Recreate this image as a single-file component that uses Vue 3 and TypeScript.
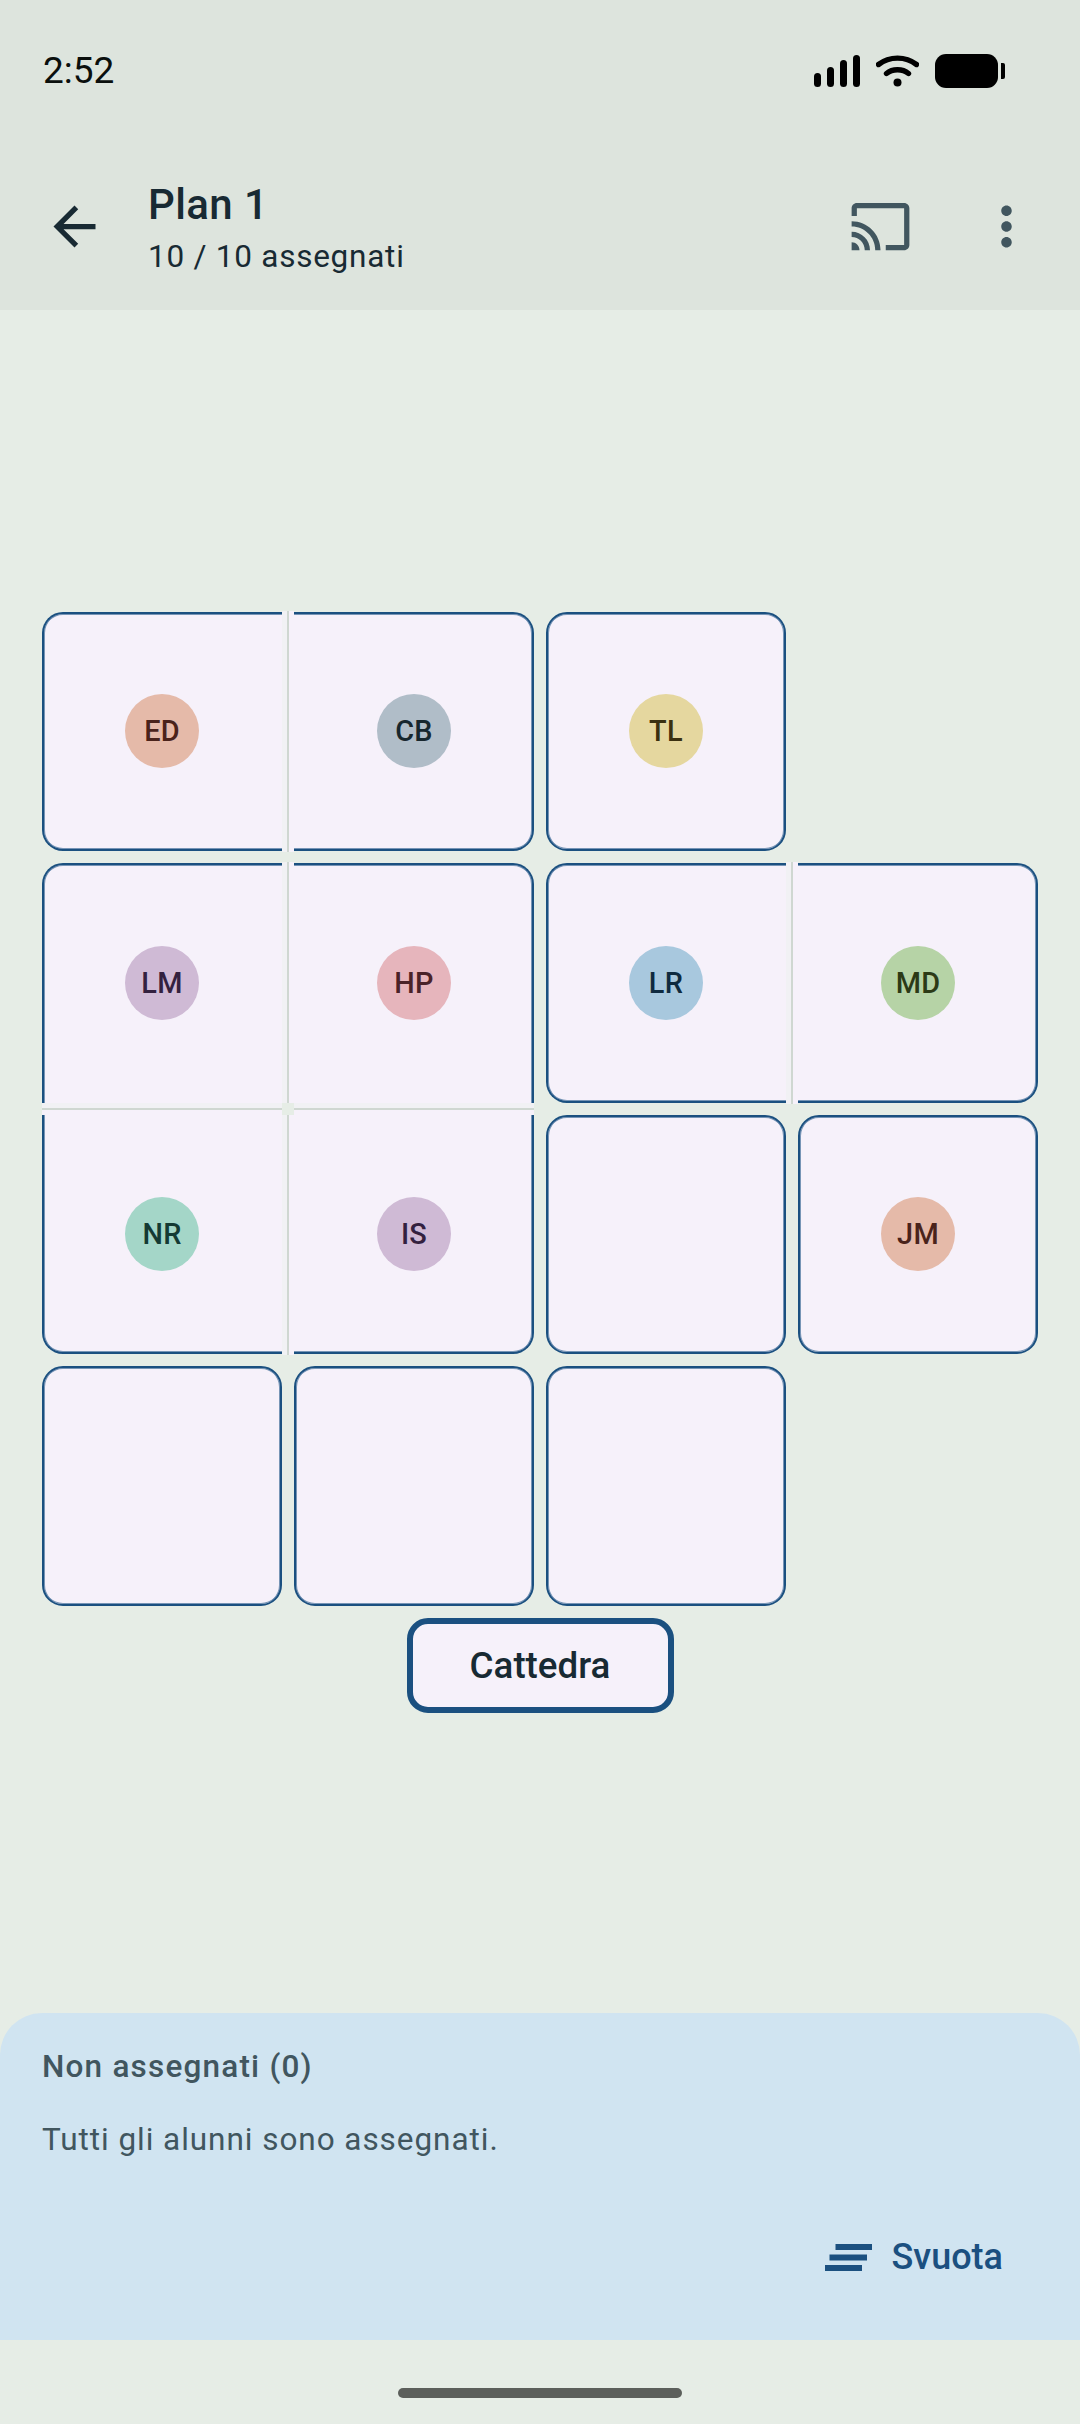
<script setup lang="ts">
interface Seat {
  id: number
  col: number
  initials?: string
  bg?: string
  fg?: string
  join?: string
  seamRight?: boolean
  seamBottom?: boolean
}

const seats: Seat[] = [
  { id: 1, col: 1, initials: 'ED', bg: '#e5baa9', fg: '#4a231b', join: 'join-r', seamRight: true },
  { id: 2, col: 2, initials: 'CB', bg: '#b0bdc8', fg: '#17272e', join: 'join-l' },
  { id: 3, col: 3, initials: 'TL', bg: '#e5d79f', fg: '#3a3010' },
  { id: 4, col: 1, initials: 'LM', bg: '#cfbad5', fg: '#33213f', join: 'join-r join-b', seamRight: true, seamBottom: true },
  { id: 5, col: 2, initials: 'HP', bg: '#e6b5bc', fg: '#4a2228', join: 'join-l join-b', seamBottom: true },
  { id: 6, col: 3, initials: 'LR', bg: '#a8c8de', fg: '#0f2b40', join: 'join-r', seamRight: true },
  { id: 7, col: 4, initials: 'MD', bg: '#b6d3a6', fg: '#2c3a16', join: 'join-l' },
  { id: 8, col: 1, initials: 'NR', bg: '#a4d6c8', fg: '#143a33', join: 'join-r join-t', seamRight: true },
  { id: 9, col: 2, initials: 'IS', bg: '#cfbad5', fg: '#33213f', join: 'join-l join-t' },
  { id: 10, col: 3 },
  { id: 11, col: 4, initials: 'JM', bg: '#e5baa9', fg: '#4a231b' },
  { id: 12, col: 1 },
  { id: 13, col: 2 },
  { id: 14, col: 3 }
]
</script>

<template>
  <div class="page">
    <header class="top">
      <div class="status">
        <span class="time">2:52</span>
        <div class="status-icons">
          <div class="signal">
            <i class="b1"></i><i class="b2"></i><i class="b3"></i><i class="b4"></i>
          </div>
          <svg class="wifi" width="43" height="32" viewBox="0 0 43 32">
            <path d="M2.5 9.5C13.5 1 29.5 1 40.5 9.5" fill="none" stroke="#000" stroke-width="5.4" stroke-linecap="round" />
            <path d="M10.5 18.5C16.5 13.5 26.5 13.5 32.5 18.5" fill="none" stroke="#000" stroke-width="5.4" stroke-linecap="round" />
            <circle cx="21.5" cy="27.5" r="4" fill="#000" />
          </svg>
          <div class="battery"><span class="body"></span><span class="nub"></span></div>
        </div>
      </div>
      <div class="toolbar">
        <svg class="icon back" viewBox="0 0 24 24"><path d="M20 11H7.83l5.59-5.59L12 4l-8 8 8 8 1.41-1.41L7.83 13H20v-2z" /></svg>
        <div class="titles">
          <div class="title">Plan 1</div>
          <div class="subtitle">10 / 10 assegnati</div>
        </div>
        <svg class="icon cast" viewBox="0 0 24 24"><path d="M21 3H3c-1.1 0-2 .9-2 2v3h2V5h18v14h-7v2h7c1.1 0 2-.9 2-2V5c0-1.1-.9-2-2-2zM1 18v3h3c0-1.66-1.34-3-3-3zm0-4v2c2.76 0 5 2.24 5 5h2c0-3.87-3.13-7-7-7zm0-4v2c4.97 0 9 4.03 9 9h2c0-6.08-4.93-11-11-11z" /></svg>
        <svg class="icon more" viewBox="0 0 24 24"><path d="M12 8c1.1 0 2-.9 2-2s-.9-2-2-2-2 .9-2 2 .9 2 2 2zm0 2c-1.1 0-2 .9-2 2s.9 2 2 2 2-.9 2-2-.9-2-2-2zm0 6c-1.1 0-2 .9-2 2s.9 2 2 2 2-.9 2-2-.9-2-2-2z" /></svg>
      </div>
    </header>

    <main class="board">
      <div class="grid">
        <div
          v-for="s in seats"
          :key="s.id"
          class="cell"
          :class="s.join"
          :style="{ gridColumnStart: s.col }"
        >
          <span v-if="s.initials" class="avatar" :style="{ background: s.bg, color: s.fg }">{{ s.initials }}</span>
          <span v-if="s.seamRight" class="seam seam-v"></span>
          <span v-if="s.seamBottom" class="seam seam-h"></span>
          <span v-if="s.seamRight && s.seamBottom" class="cross"></span>
        </div>
      </div>
      <div class="desk">Cattedra</div>
    </main>

    <section class="sheet">
      <div class="sheet-title">Non assegnati (0)</div>
      <div class="sheet-body">Tutti gli alunni sono assegnati.</div>
      <div class="sheet-actions">
        <svg class="clear" width="47" height="27" viewBox="0 0 47 27">
          <rect x="10.5" y="0" width="36.5" height="6" />
          <rect x="4.5" y="10.5" width="37.5" height="6" />
          <rect x="0" y="21" width="37" height="6" />
        </svg>
        <span class="clear-label">Svuota</span>
      </div>
    </section>

    <footer class="nav"><span class="handle"></span></footer>
  </div>
</template>

<style>
html,
body {
  margin: 0;
  padding: 0;
}
</style>

<style scoped>
.page {
  width: 1080px;
  height: 2424px;
  display: flex;
  flex-direction: column;
  background: #e6ede6;
  font-family: Roboto, "Noto Sans", sans-serif;
  color: #182a33;
  overflow: hidden;
}
.top {
  height: 310px;
  flex: none;
  background: #dde4dd;
}
.status {
  height: 140px;
  box-sizing: border-box;
  padding: 49px 75px 0 43px;
  display: flex;
  justify-content: space-between;
  align-items: flex-start;
}
.time {
  font-size: 37px;
  line-height: 44px;
  color: #0a0f0d;
}
.status-icons {
  display: flex;
  align-items: flex-start;
  padding-top: 6px;
}
.signal {
  display: flex;
  align-items: flex-end;
  gap: 6px;
  height: 32px;
  margin-right: 16px;
}
.signal i {
  display: block;
  width: 7px;
  background: #000;
  border-radius: 4px;
}
.b1 { height: 14px; }
.b2 { height: 20px; }
.b3 { height: 27px; }
.b4 { height: 32px; }
.wifi {
  display: block;
  margin-right: 16px;
}
.battery {
  display: flex;
  align-items: center;
  gap: 3px;
  margin-top: -1px;
}
.body {
  display: block;
  width: 63px;
  height: 34px;
  background: #000;
  border-radius: 11px;
}
.nub {
  display: block;
  width: 4px;
  height: 16px;
  background: #000;
  border-radius: 0 2px 2px 0;
}
.toolbar {
  height: 170px;
  box-sizing: border-box;
  padding: 55px 42px 0 43px;
  display: flex;
  align-items: flex-start;
}
.icon {
  display: block;
  width: 63px;
  height: 63px;
  flex: none;
}
.back {
  fill: #182a33;
}
.titles {
  margin-left: 42px;
  margin-top: -15px;
  flex: 1;
}
.title {
  font-size: 42px;
  font-weight: 500;
  line-height: 50px;
  letter-spacing: 0.4px;
}
.subtitle {
  font-size: 31.5px;
  line-height: 42px;
  letter-spacing: 0.75px;
  margin-top: 6px;
}
.cast {
  fill: #41565f;
  margin-right: 63px;
}
.more {
  fill: #41565f;
}
.board {
  flex: 1;
  padding: 301.5px 42px 0;
  min-height: 0;
}
.grid {
  display: grid;
  grid-template-columns: repeat(4, 240px);
  grid-auto-rows: 239.6px;
  column-gap: 12px;
  row-gap: 12px;
}
.cell {
  --bt: 2px;
  --br: 2px;
  --bb: 2px;
  --bl: 2px;
  --st: 1px;
  --sr: 1px;
  --sb: 1px;
  --sl: 1px;
  position: relative;
  box-sizing: border-box;
  background: #f6f1fa;
  border-style: solid;
  border-color: #1b5080;
  border-width: var(--bt) var(--br) var(--bb) var(--bl);
  padding: calc(2px - var(--bt)) calc(2px - var(--br)) calc(2px - var(--bb)) calc(2px - var(--bl));
  box-shadow:
    inset 0 var(--st) 0 #7795b6,
    inset calc(-1 * var(--sr)) 0 0 #7795b6,
    inset 0 calc(-1 * var(--sb)) 0 #7795b6,
    inset var(--sl) 0 0 #7795b6;
  border-radius: 21px;
  display: flex;
  align-items: center;
  justify-content: center;
}
.join-r {
  --br: 0px;
  --sr: 0px;
  border-top-right-radius: 0;
  border-bottom-right-radius: 0;
}
.join-l {
  --bl: 0px;
  --sl: 0px;
  border-top-left-radius: 0;
  border-bottom-left-radius: 0;
}
.join-b {
  --bb: 0px;
  --sb: 0px;
  border-bottom-left-radius: 0;
  border-bottom-right-radius: 0;
}
.join-t {
  --bt: 0px;
  --st: 0px;
  border-top-left-radius: 0;
  border-top-right-radius: 0;
}
.avatar {
  width: 74px;
  height: 74px;
  border-radius: 50%;
  display: flex;
  align-items: center;
  justify-content: center;
  font-size: 28.875px;
  font-weight: 500;
  letter-spacing: 0.3px;
}
.seam {
  position: absolute;
  display: block;
}
.seam-v {
  top: calc(-1 * var(--bt) - 1px);
  bottom: calc(-1 * var(--bb) - 1px);
  right: calc(-1 * var(--br) - 12px);
  width: 12px;
  background: linear-gradient(to right, #f1f1f4 0 4.6px, #cfd7d1 4.6px 7.4px, #f6f1fa 7.4px);
}
.seam-h {
  left: calc(-1 * var(--bl));
  right: calc(-1 * var(--br));
  bottom: calc(-1 * var(--bb) - 12px);
  height: 12px;
  background: linear-gradient(to bottom, #f1f1f4 0 4.6px, #cfd7d1 4.6px 7.4px, #f6f1fa 7.4px);
}
.cross {
  position: absolute;
  right: calc(-1 * var(--br) - 12px);
  bottom: calc(-1 * var(--bb) - 12px);
  width: 12px;
  height: 12px;
  background: #e6ede6;
  z-index: 1;
}
.desk {
  box-sizing: border-box;
  width: 267px;
  height: 95px;
  margin: 12px auto 0;
  background: #f6f1fa;
  border: 6px solid #1b5080;
  border-radius: 21px;
  display: flex;
  align-items: center;
  justify-content: center;
  font-size: 36.75px;
  font-weight: 500;
  color: #182a33;
}
.sheet {
  height: 327px;
  flex: none;
  box-sizing: border-box;
  padding: 33px 42px 0;
  background: #d0e4f1;
  border-radius: 42px 42px 0 0;
  color: #41565f;
}
.sheet-title {
  font-size: 31.5px;
  font-weight: 500;
  line-height: 42px;
  letter-spacing: 1.2px;
}
.sheet-body {
  font-size: 31.5px;
  line-height: 42px;
  letter-spacing: 0.95px;
  margin-top: 31px;
}
.sheet-actions {
  display: flex;
  justify-content: flex-end;
  align-items: center;
  gap: 20px;
  margin-top: 74px;
  padding-right: 35px;
}
.clear {
  display: block;
  fill: #1b5080;
}
.clear-label {
  font-size: 36px;
  font-weight: 500;
  line-height: 44px;
  color: #1b5080;
}
.nav {
  height: 84px;
  flex: none;
  display: flex;
  justify-content: center;
  padding-top: 48px;
  box-sizing: border-box;
}
.handle {
  display: block;
  width: 284px;
  height: 10px;
  border-radius: 5px;
  background: #5c5f5b;
}
</style>
